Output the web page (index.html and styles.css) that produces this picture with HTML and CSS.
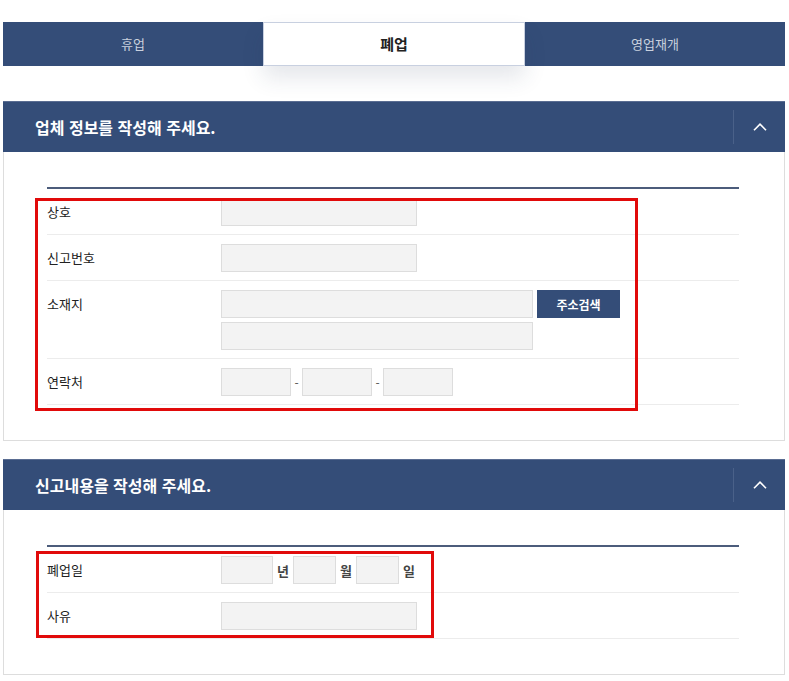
FILE: index.html
```html
<!DOCTYPE html>
<html lang="ko">
<head>
    <meta charset="UTF-8">
    <title>폐업 신고</title>
    <link rel="stylesheet" href="styles.css">
</head>
<body>
    <div class="wrap">
        <ul class="tabs">
            <li>휴업</li>
            <li class="on">폐업</li>
            <li>영업재개</li>
        </ul>

        <!-- 업체 정보 -->
        <section class="panel">
            <div class="panel-head">
                <h3>업체 정보를 작성해 주세요.</h3>
                <button type="button" class="toggle" aria-label="접기">
                    <svg width="14" height="8" viewBox="0 0 14 8"><path d="M1 7.2 L7 1.2 L13 7.2" fill="none" stroke="#fff" stroke-width="1.6"/></svg>
                </button>
            </div>
            <div class="panel-body">
                <div class="form-table">
                    <div class="row">
                        <div class="th">상호</div>
                        <div class="td"><input type="text" class="inp w-md"></div>
                    </div>
                    <div class="row">
                        <div class="th">신고번호</div>
                        <div class="td"><input type="text" class="inp w-md"></div>
                    </div>
                    <div class="row">
                        <div class="th">소재지</div>
                        <div class="td stack">
                            <div class="line">
                                <input type="text" class="inp w-lg">
                                <button type="button" class="btn-search">주소검색</button>
                            </div>
                            <input type="text" class="inp w-lg">
                        </div>
                    </div>
                    <div class="row">
                        <div class="th">연락처</div>
                        <div class="td">
                            <input type="text" class="inp w-tel">
                            <span class="dash">-</span>
                            <input type="text" class="inp w-tel">
                            <span class="dash">-</span>
                            <input type="text" class="inp w-tel">
                        </div>
                    </div>
                </div>
                <div class="mark mark-info"></div>
            </div>
        </section>

        <!-- 신고 내용 -->
        <section class="panel">
            <div class="panel-head">
                <h3>신고내용을 작성해 주세요.</h3>
                <button type="button" class="toggle" aria-label="접기">
                    <svg width="14" height="8" viewBox="0 0 14 8"><path d="M1 7.2 L7 1.2 L13 7.2" fill="none" stroke="#fff" stroke-width="1.6"/></svg>
                </button>
            </div>
            <div class="panel-body">
                <div class="form-table">
                    <div class="row">
                        <div class="th">폐업일</div>
                        <div class="td">
                            <input type="text" class="inp w-year">
                            <span class="unit">년</span>
                            <input type="text" class="inp w-day">
                            <span class="unit">월</span>
                            <input type="text" class="inp w-day">
                            <span class="unit">일</span>
                        </div>
                    </div>
                    <div class="row">
                        <div class="th">사유</div>
                        <div class="td"><input type="text" class="inp w-md"></div>
                    </div>
                </div>
                <div class="mark mark-report"></div>
            </div>
        </section>
    </div>
</body>
</html>
```

FILE: styles.css
```css
body {
    font-family: 'Malgun Gothic', 'Noto Sans CJK KR', 'Noto Sans', sans-serif;
    background-color: #fff;
    color: #333;
    margin: 0;
}
.wrap {
    padding: 22px 4px 0 3px;
}
/* Tabs */
.tabs {
    display: flex;
    list-style: none;
    margin: 0 0 35px;
    padding: 0;
    background: #344d78;
}
.tabs li {
    flex: 1;
    height: 44px;
    line-height: 44px;
    text-align: center;
    font-size: 13px;
    color: #c9d1de;
}
.tabs li.on {
    background: #fff;
    border: 1px solid #c8d0e0;
    height: 42px;
    line-height: 42px;
    color: #222;
    font-size: 15px;
    font-weight: bold;
    box-shadow: 0 12px 22px rgba(40, 55, 90, 0.12);
}
/* Panels */
.panel {
    margin-bottom: 18px;
}
.panel-head {
    display: flex;
    align-items: center;
    height: 51px;
    background: #344d78;
    border-top: 1px solid #5a6d92;
    box-sizing: border-box;
}
.panel-head h3 {
    flex: 1;
    margin: 0;
    padding-left: 32px;
    font-size: 16px;
    font-weight: bold;
    color: #fff;
}
.toggle {
    width: 52px;
    height: 34px;
    padding: 0;
    border: none;
    border-left: 1px solid #4a6189;
    background: none;
    cursor: pointer;
    display: flex;
    align-items: center;
    justify-content: center;
}
.panel-body {
    position: relative;
    padding: 35px 45px 35px 43px;
    border: 1px solid #ddd;
    border-top: none;
}
.form-table {
    border-top: 2px solid #4c5c7b;
}
.row {
    display: flex;
    align-items: flex-start;
    padding: 9px 0 8px;
    border-bottom: 1px solid #ececec;
}
.th {
    width: 174px;
    flex-shrink: 0;
    font-size: 13px;
    line-height: 28px;
    color: #222;
}
.td {
    display: flex;
    align-items: center;
}
.td.stack {
    flex-direction: column;
    align-items: flex-start;
    gap: 4px;
}
.line {
    display: flex;
    gap: 4px;
}
.inp {
    height: 28px;
    box-sizing: border-box;
    margin: 0;
    border: 1px solid #ddd;
    background: #f3f3f3;
}
.w-md { width: 196px; }
.w-lg { width: 312px; }
.w-tel { width: 70px; }
.w-year { width: 52px; }
.w-day { width: 43px; }
.dash {
    width: 11px;
    text-align: center;
    font-size: 12px;
    color: #555;
}
.unit {
    margin: 0 4px;
    font-size: 13px;
    font-weight: bold;
    color: #444;
}
.btn-search {
    width: 83px;
    height: 28px;
    border: none;
    background: #344d78;
    color: #fff;
    font-family: inherit;
    font-size: 12px;
    font-weight: bold;
    cursor: pointer;
}
/* Red annotation boxes */
.mark {
    position: absolute;
    border: 3px solid #e10a0a;
    box-sizing: border-box;
}
.mark-info {
    left: 31px;
    top: 46px;
    width: 603px;
    height: 213px;
}
.mark-report {
    left: 32px;
    top: 41px;
    width: 398px;
    height: 87px;
}
```
